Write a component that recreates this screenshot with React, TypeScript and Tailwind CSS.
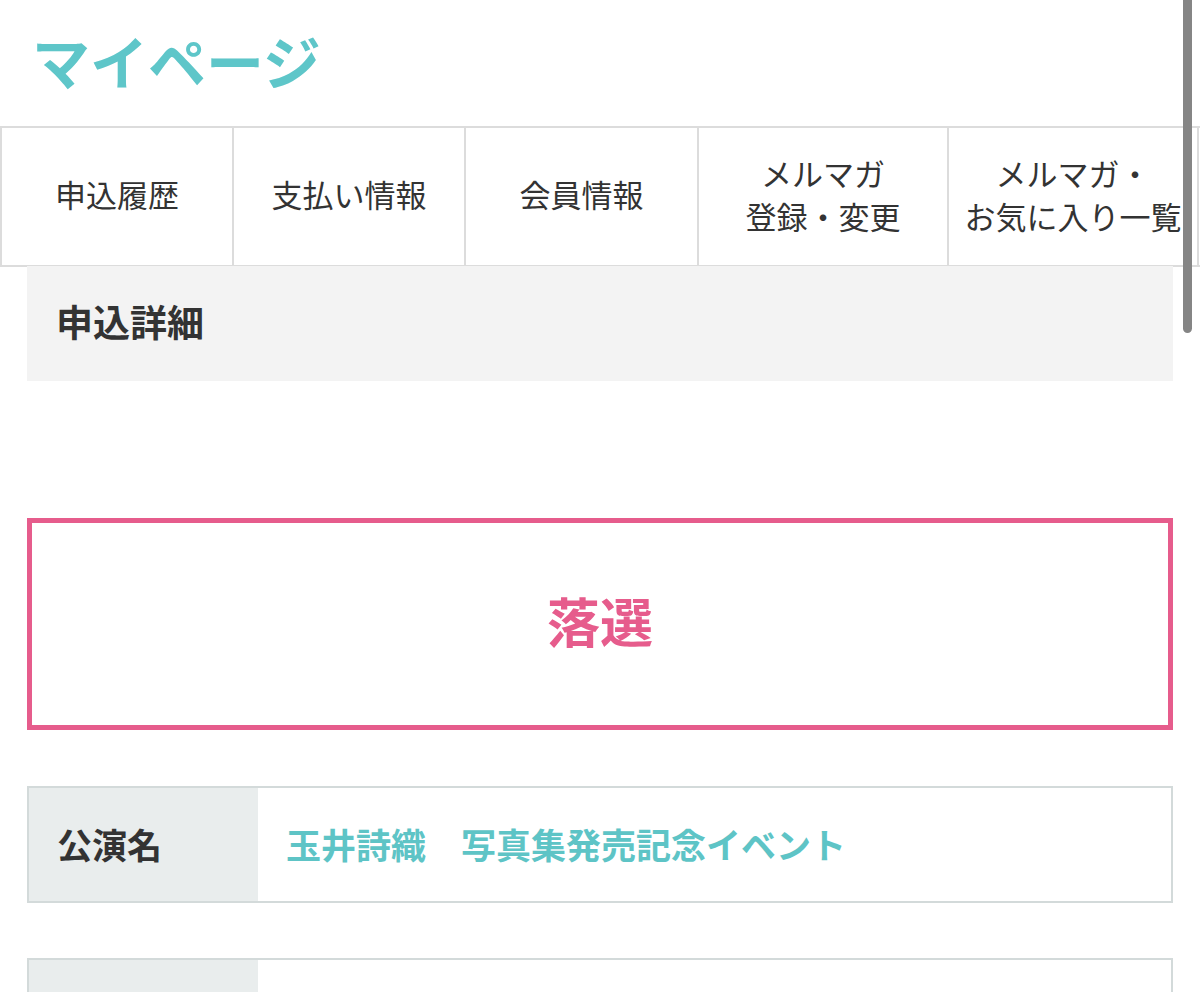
import React from "react";

const font = "font-['Noto_Sans_CJK_JP','Noto_Sans',sans-serif]";

function Tab({ w, lines, first }: { w: string; lines: string[]; first?: boolean }) {
  return (
    <div
      className={`${w} shrink-0 h-full flex flex-col items-center justify-center pb-[6px] border-r-2 border-[#dcdcdc] ${
        first ? "border-l-2" : ""
      } text-[31px] leading-[43px] text-[#333] whitespace-nowrap`}
    >
      {lines.map((l) => (
        <span key={l}>{l}</span>
      ))}
    </div>
  );
}

function Row({ label, value }: { label: string; value: string }) {
  return (
    <div className="flex h-[117px] border-2 border-[#d3dada] bg-white">
      <div className="w-[229px] shrink-0 bg-[#e9eded] flex items-center pl-[28px] text-[35px] font-bold text-[#333]">
        {label}
      </div>
      <div className="flex items-center pl-[28px] text-[35px] font-bold text-[#5ec4c6] whitespace-nowrap">
        {value}
      </div>
    </div>
  );
}

export default function App() {
  return (
    <div className={`relative w-[1200px] h-[992px] overflow-hidden bg-white ${font}`}>
      <div className="h-[126px] flex items-center pl-[32px] pb-[6px]">
        <h1 className="text-[58px] leading-none font-bold text-[#5ec6c9]">マイページ</h1>
      </div>
      <div className="flex h-[141px] border-y-2 border-[#dcdcdc] w-[1200px]">
        <Tab w="w-[234px]" lines={["申込履歴"]} first />
        <Tab w="w-[232px]" lines={["支払い情報"]} />
        <Tab w="w-[233px]" lines={["会員情報"]} />
        <Tab w="w-[250px]" lines={["メルマガ", "登録・変更"]} />
        <Tab w="w-[250px]" lines={["メルマガ・", "お気に入り一覧"]} />
      </div>
      <div className="px-[27px]">
        <div className="h-[115px] bg-[#f3f3f3] flex items-center pl-[29px] pb-[3px] text-[37px] font-bold text-[#333] -mt-[1px]">
          申込詳細
        </div>
        <div className="h-[137px]" />
        <div className="h-[212px] border-[5px] border-[#e65c8c] flex items-center justify-center pb-[8px]">
          <span className="text-[53px] font-bold text-[#e65c8c] leading-none">落選</span>
        </div>
        <div className="h-[56px]" />
        <Row label="公演名" value="玉井詩織　写真集発売記念イベント" />
        <div className="h-[55px]" />
        <Row label="" value="" />
      </div>
      <div className="absolute right-[8px] top-[-4px] w-[9px] h-[337px] rounded-full bg-[#858585]" />
    </div>
  );
}
